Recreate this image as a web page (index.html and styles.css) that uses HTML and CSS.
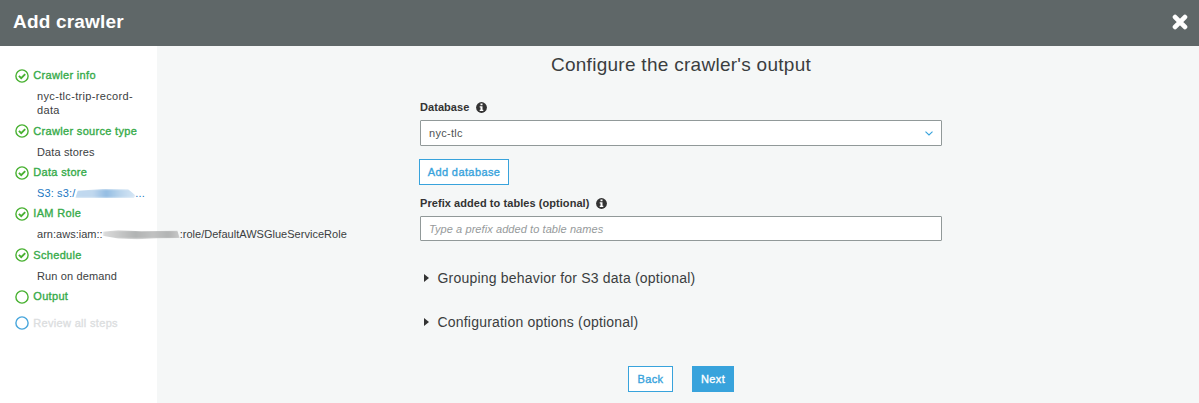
FILE: index.html
```html
<!DOCTYPE html>
<html lang="en">
<head>
<meta charset="utf-8">
<title>Add crawler</title>
<link rel="stylesheet" href="styles.css">
</head>
<body>
<svg class="defs" width="0" height="0">
  <symbol id="done" viewBox="0 0 14 14"><circle cx="7" cy="7" r="6.1" fill="none" stroke="currentColor" stroke-width="1.4"/><path d="M3.9 6.9 6.2 9.2 10.2 5.1" fill="none" stroke="currentColor" stroke-width="1.9"/></symbol>
  <symbol id="open" viewBox="0 0 14 14"><circle cx="7" cy="7" r="6.1" fill="none" stroke="currentColor" stroke-width="1.4"/></symbol>
  <symbol id="info" viewBox="0 0 11 11"><circle cx="5.5" cy="5.5" r="5.4" fill="#333"/><path d="M4.5 1.5h2v1.7h-2zM3.7 4.2h2.8v3.6h.8v1.3H3.7V7.8h.8V5.5h-.8z" fill="#fff"/></symbol>
</svg>
<header class="topbar">
  <h1 class="topbar-title">Add crawler</h1>
  <svg class="close" viewBox="0 0 16 16"><path d="M3.1 3.1 12.9 12.9M12.9 3.1 3.1 12.9" stroke="#fff" stroke-width="4.8" stroke-linecap="round"/></svg>
</header>
<div class="layout">
  <nav class="steps">
    <div class="step"><div class="step-title"><svg class="mark"><use href="#done"/></svg><span>Crawler info</span></div><div class="detail wide">nyc-tlc-trip-record-<br>data</div></div>
    <div class="step"><div class="step-title"><svg class="mark"><use href="#done"/></svg><span>Crawler source type</span></div><div class="detail">Data stores</div></div>
    <div class="step"><div class="step-title"><svg class="mark"><use href="#done"/></svg><span>Data store</span></div><div class="detail link">S3: s3:/<i class="smudge smudge-blue"></i>...</div></div>
    <div class="step"><div class="step-title"><svg class="mark"><use href="#done"/></svg><span>IAM Role</span></div><div class="detail arn">arn:aws:iam::<i class="smudge smudge-gray"></i>:role/DefaultAWSGlueServiceRole</div></div>
    <div class="step"><div class="step-title"><svg class="mark"><use href="#done"/></svg><span>Schedule</span></div><div class="detail">Run on demand</div></div>
    <div class="step step-current"><div class="step-title"><svg class="mark"><use href="#open"/></svg><span>Output</span></div></div>
    <div class="step"><div class="step-title pending"><svg class="mark"><use href="#open"/></svg><span>Review all steps</span></div></div>
  </nav>
  <main class="content">
    <h2 class="heading">Configure the crawler's output</h2>
    <div class="form">
      <div class="label"><span>Database</span><svg class="info"><use href="#info"/></svg></div>
      <div class="field select"><span>nyc-tlc</span><svg class="chevron" viewBox="0 0 8 5"><path d="M.5.6 4 4 7.5.6" fill="none" stroke="#38a3dc" stroke-width="1.1"/></svg></div>
      <button class="btn btn-add">Add database</button>
      <div class="label label-prefix"><span>Prefix added to tables (optional)</span><svg class="info"><use href="#info"/></svg></div>
      <div class="field prefix">Type a prefix added to table names</div>
      <div class="expander"><svg class="caret" viewBox="0 0 5 8"><path d="M0 0 5 4 0 8z" fill="#333"/></svg><span>Grouping behavior for S3 data (optional)</span></div>
      <div class="expander"><svg class="caret" viewBox="0 0 5 8"><path d="M0 0 5 4 0 8z" fill="#333"/></svg><span>Configuration options (optional)</span></div>
    </div>
    <div class="actions"><button class="btn back">Back</button><button class="btn next">Next</button></div>
  </main>
</div>
</body>
</html>
```
FILE: styles.css
```css
* { box-sizing: border-box; }
body { margin: 0; width: 1199px; height: 403px; overflow: hidden; background: #f5f7f7; color: #3b3e3f; font: 11px/14px "Liberation Sans", Arial, sans-serif; }
.defs { display: block; height: 0; }
.topbar { height: 46px; background: #5f6768; display: flex; align-items: center; justify-content: space-between; padding: 0 11px 2px 13px; }
.topbar-title { margin: 0; color: #fff; font-size: 19px; line-height: 24px; font-weight: bold; letter-spacing: .18px; }
.close { width: 16px; height: 16px; }
.layout { display: flex; height: 357px; }
.steps { width: 157px; flex: none; background: #fff; padding: 22.4px 0 0 15px; display: flex; flex-direction: column; gap: 6.3px; }
.step-title { display: flex; align-items: center; height: 14px; gap: 4.3px; color: #37ab4a; white-space: nowrap; -webkit-text-stroke: .35px currentColor; letter-spacing: .32px; }
.mark { width: 14px; height: 14px; flex: none; color: #48b131; margin-top: 1.6px; }
.step-current { padding-bottom: 6.9px; }
.pending { color: #dcdedf; }
.pending .mark { color: #48a6dc; margin-top: 0; }
.detail { margin: 7px 0 0 22px; white-space: nowrap; letter-spacing: .13px; }
.wide { letter-spacing: .34px; }
.arn { letter-spacing: .02px; }
.link { color: #2177c2; }
.smudge { display: inline-block; vertical-align: -1px; height: 9px; filter: blur(.8px); }
.smudge-blue { width: 60px; clip-path: polygon(4% 20%, 45% 0, 88% 4%, 100% 70%, 98% 100%, 0 100%); background: repeating-linear-gradient(90deg, rgba(255,255,255,.18) 0 1px, transparent 1px 3px), linear-gradient(90deg, #bcd7ef, #bcd5ed 30%, #8db9e1 52%, #b5d2eb 75%, #d3e5f5); }
.smudge-gray { width: 77px; clip-path: polygon(0 15%, 20% 0, 50% 12%, 97% 5%, 100% 85%, 70% 88%, 45% 100%, 20% 90%, 0 60%); background: repeating-linear-gradient(90deg, rgba(255,255,255,.2) 0 1px, transparent 1px 3px), linear-gradient(90deg, #d9d9d9, #c4c5c5 20%, #acaeae 42%, #bcbdbd 65%, #acaeae 85%, #c5c6c6); }
.content { flex: 1; padding: 6px 0 0; }
.heading { margin: 0 0 24px; padding-left: 6px; text-align: center; font-size: 19px; line-height: 25px; font-weight: normal; letter-spacing: .28px; }
.form { width: 522px; margin-left: 263px; }
.label { display: flex; align-items: center; gap: 7px; height: 12px; font-weight: bold; color: #333; white-space: nowrap; letter-spacing: .06px; }
.info { width: 11px; height: 11px; margin-top: 1px; }
.field { height: 26px; border: 1px solid #919999; border-radius: 1px; background: #fff; padding: 0 8px; display: flex; align-items: center; justify-content: space-between; }
.select { margin-top: 7px; letter-spacing: .3px; color: #505354; }
.chevron { width: 8px; height: 5px; }
.btn { font: 11px/14px "Liberation Sans", Arial, sans-serif; letter-spacing: .4px; -webkit-text-stroke: .35px currentColor; height: 26px; padding: 0; border: 1px solid #38a3dc; background: #fff; color: #38a3dc; }
.btn-add { display: block; width: 90px; margin: 13px 0 0 -1px; }
.label-prefix { margin-top: 12px; }
.prefix { margin: 7px 0 25px; height: 25px; font-style: italic; color: #969a9b; letter-spacing: .08px; }
.expander { display: flex; align-items: center; height: 24px; margin-bottom: 20px; padding-left: 4px; gap: 8.5px; font-size: 14px; letter-spacing: .2px; }
.caret { width: 5px; height: 8px; }
.actions { display: flex; justify-content: center; gap: 19px; padding-left: 6px; margin-top: 32px; }
.back { width: 45px; }
.next { width: 42px; background: #38a3dc; color: #fff; }
```
